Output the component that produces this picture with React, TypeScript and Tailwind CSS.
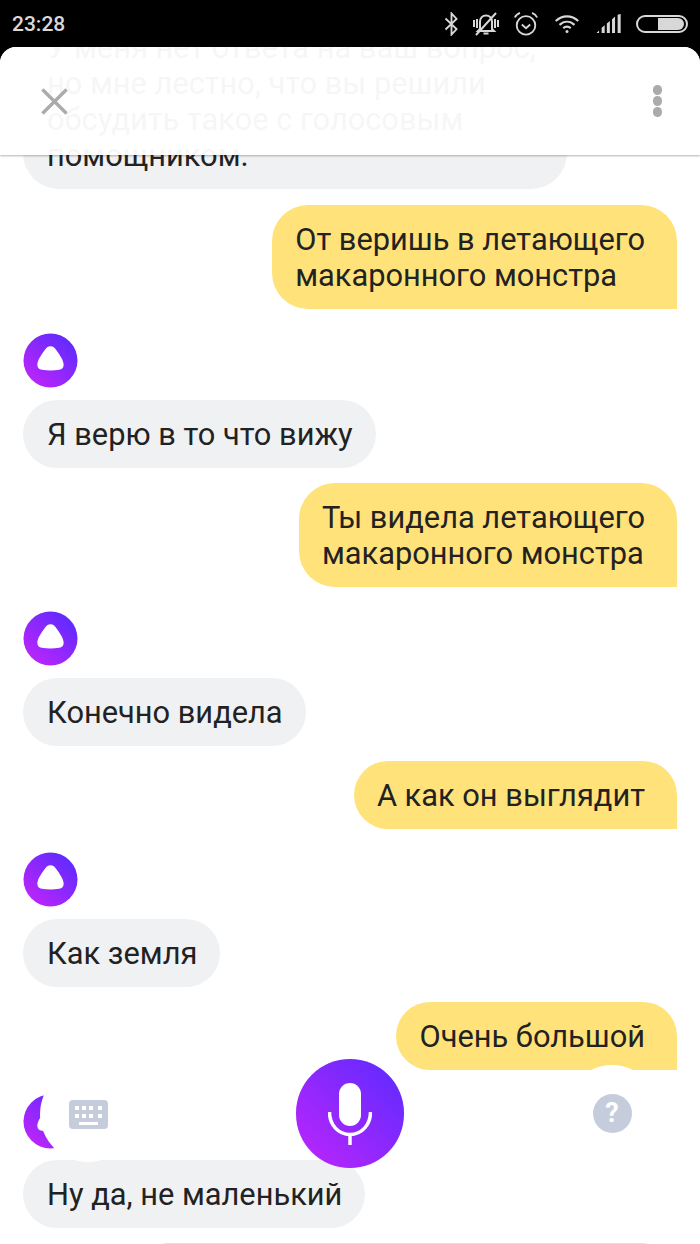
const gradId = (n: string) => `grad-${n}`;

const AliceAvatar = ({ id }: { id: string }) => (
  <svg width="55" height="55" viewBox="0 0 56 56" className="shrink-0 block">
    <defs>
      <linearGradient id={gradId(id)} x1="0.85" y1="0.1" x2="0.15" y2="0.9">
        <stop offset="0" stopColor="#5f2bff" />
        <stop offset="1" stopColor="#bb25fb" />
      </linearGradient>
    </defs>
    <circle cx="28" cy="28" r="27.5" fill={`url(#${gradId(id)})`} />
    <path d="M28 13.5c2.6 0 4.4 1.6 6.2 4.2 3.3 4.6 7.2 10.2 7.2 14.6 0 2.9-1.7 4.6-4.6 5.2-2.7.5-5.7.7-8.8.7s-6.1-.2-8.8-.7c-2.9-.6-4.6-2.3-4.6-5.2 0-4.4 3.9-10 7.2-14.6 1.8-2.6 3.6-4.2 6.2-4.2z" fill="#fff" />
  </svg>
);

const Incoming = ({ children }: { children: React.ReactNode }) => (
  <div className="self-start bg-[#f0f1f3] rounded-[36px] pl-6 pr-[23px] pt-[17px] pb-[15px]">{children}</div>
);

const Outgoing = ({ children }: { children: React.ReactNode }) => (
  <div className="self-end mr-[23px] bg-[#ffe27a] rounded-[36px] rounded-br-none pl-[23px] pr-8 pt-[17px] pb-[15px]">{children}</div>
);

const StatusIcons = () => (
  <div className="flex items-center gap-[13px] text-[#d8d8d8]">
    <svg width="15" height="24" viewBox="0 0 16 26" fill="none" stroke="currentColor" strokeWidth="2">
      <path d="M1.5 7l12 11.5-5.5 6V1.5l5.5 6L1.5 19" />
    </svg>
    <svg width="28" height="26" viewBox="0 0 28 26" fill="none" stroke="currentColor" strokeWidth="2">
      <path d="M8 18V11c0-4 2.6-6.5 6-6.5s6 2.500 6 6.500v7l2 2H6z" />
      <path d="M11.500 22.500h5" />
      <path d="M2 9v7M5 8v9M23 8v9M26 9v7" />
      <path d="M4 24L24 2" />
    </svg>
    <svg width="26" height="26" viewBox="0 0 28 28" fill="none" stroke="currentColor" strokeWidth="2">
      <circle cx="14" cy="15.500" r="10" />
      <path d="M9.500 14.500l4.500 4 4.500-4" />
      <path d="M2 7c1-2.500 3-4 5.500-5M26 7c-1-2.500-3-4-5.500-5" />
    </svg>
    <svg width="30" height="20" viewBox="0 0 30 24" fill="none" stroke="currentColor" strokeWidth="2.600">
      <path d="M1.500 8.500c8-7.500 19-7.500 27 0" />
      <path d="M6 13c5.500-5 12.500-5 18 0" />
      <path d="M10.500 17c3-2.500 6-2.500 9 0" />
      <circle cx="15" cy="21" r="1.800" fill="currentColor" stroke="none" />
    </svg>
    <svg width="28" height="19" viewBox="0 0 29 22" fill="currentColor">
      <path d="M0 22l3-3v3zM6 22v-6l3.500-3v9zM12 22V11l3.500-3v14zM18 22V6l3.500-3v19zM24.500 22V1L28 0v22z" />
    </svg>
    <div className="w-[52px] h-[18px] rounded-full border-2 border-[#d8d8d8] flex justify-end py-[1px] pr-[2px]">
      <div className="w-[26px] h-full bg-[#d8d8d8] rounded-r-[6px]" />
    </div>
  </div>
);

const App = () => (
  <div className="w-[700px] h-[1244px] bg-black flex flex-col overflow-hidden relative font-['Roboto',sans-serif]">
    <div className="h-[47px] shrink-0 flex items-center justify-between pl-3 pr-3">
      <span className="text-[21px] leading-none font-medium text-[#d8d8d8] pt-[2px]">23:28</span>
      <StatusIcons />
    </div>

    <div className="flex-1 bg-white rounded-t-[16px] overflow-hidden relative">
      <div className="flex flex-col pl-[23px] -mt-[34px] text-[30.8px] leading-[36px] text-[#222]">
        <div className="self-start w-[544px] bg-[#f0f1f3] rounded-[36px] px-6 pt-[17px] pb-[15px] whitespace-nowrap">
          <div>У меня нет ответа на ваш вопрос,</div>
          <div>но мне лестно, что вы решили</div>
          <div>обсудить такое с голосовым</div>
          <div>помощником.</div>
        </div>

        <div className="mt-4 self-end"><Outgoing>От веришь в летающего<br />макаронного монстра</Outgoing></div>
        <div className="mt-6 mb-3"><AliceAvatar id="a" /></div>
        <Incoming>Я верю в то что вижу</Incoming>

        <div className="mt-[15px] self-end"><Outgoing>Ты видела летающего<br />макаронного монстра</Outgoing></div>
        <div className="mt-6 mb-3"><AliceAvatar id="b" /></div>
        <Incoming>Конечно видела</Incoming>

        <div className="mt-[15px] self-end"><Outgoing>А как он выглядит</Outgoing></div>
        <div className="mt-[23px] mb-3"><AliceAvatar id="c" /></div>
        <Incoming>Как земля</Incoming>

        <div className="mt-[15px] self-end"><Outgoing>Очень большой</Outgoing></div>
        <div className="mt-6 mb-[11px]"><AliceAvatar id="d" /></div>
        <Incoming>Ну да, не маленький</Incoming>

        <div className="mt-[15px] self-end mr-[23px] w-[544px] h-[60px] bg-[#ffe27a] rounded-t-[36px]" />
      </div>

      {/* Translucent top bar */}
      <div className="absolute top-0 inset-x-0 h-[108px] bg-white/[0.96] shadow-[0_1px_2px_rgba(0,0,0,0.3)] flex items-center justify-between pl-[41px] pr-[38px]">
        <svg width="27" height="27" viewBox="0 0 28 28" stroke="#ababab" strokeWidth="3.500" fill="none">
          <path d="M1.500 1.500l25 25M26.500 1.500l-25 25" />
        </svg>
        <div className="flex flex-col gap-[1px]">
          <span className="w-[9px] h-[10px] rounded-full bg-[#ababab]" />
          <span className="w-[9px] h-[10px] rounded-full bg-[#ababab]" />
          <span className="w-[9px] h-[10px] rounded-full bg-[#ababab]" />
        </div>
      </div>

      {/* Floating input controls */}
      <div className="absolute left-[40px] top-[1019px] w-[96px] h-[96px] rounded-full bg-white flex items-center justify-center">
        <svg width="39" height="29" viewBox="0 0 39 29" className="block">
          <rect width="39" height="29" rx="4" fill="#c5cddd" />
          <g fill="#fff">
            <rect x="6" y="6" width="4" height="4" /><rect x="13" y="6" width="4" height="4" /><rect x="20" y="6" width="4" height="4" /><rect x="29" y="6" width="4" height="4" />
            <rect x="6" y="14" width="4" height="4" /><rect x="13" y="14" width="4" height="4" /><rect x="20" y="14" width="4" height="4" /><rect x="29" y="14" width="4" height="4" />
            <rect x="10" y="22" width="19" height="3" />
          </g>
        </svg>
      </div>

      <div className="absolute left-[296px] top-[1012px] w-[108px] h-[109px] rounded-full bg-[linear-gradient(to_top_right,#c025fb,#5a2bff)] flex items-center justify-center">
        <svg width="44" height="62" viewBox="0 0 44 62" fill="none" className="block">
          <rect x="11" y="0" width="22" height="43" rx="11" fill="#fff" />
          <path d="M1.500 29c0 13 9 22.500 20.500 22.500S42.500 42 42.500 29" stroke="#fff" strokeWidth="3.500" />
          <path d="M22 51v11" stroke="#fff" strokeWidth="3.500" />
        </svg>
      </div>

      <div className="absolute left-[564px] top-[1018px] w-[96px] h-[96px] rounded-full bg-white flex items-center justify-center">
        <div className="w-[39px] h-[39px] rounded-full bg-[#c5cddd] flex items-center justify-center text-white font-bold text-[27px] leading-none">?</div>
      </div>
    </div>
  </div>
);

export default App;
